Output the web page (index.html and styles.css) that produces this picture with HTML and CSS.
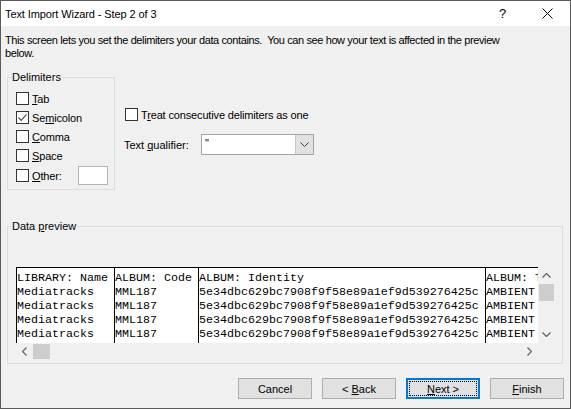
FILE: index.html
```html
<!DOCTYPE html>
<html lang="en">
<head>
    <meta charset="UTF-8">
    <meta name="viewport" content="width=device-width, initial-scale=1.0">
    <title>Text Import Wizard - Step 2 of 3</title>
    <link rel="stylesheet" href="styles.css">
</head>
<body>
    <div class="window">
        <div class="titlebar">
            <span class="title">Text Import Wizard - Step 2 of 3</span>
            <span class="caption-btn">?</span>
            <span class="caption-btn">
                <svg width="11" height="11" viewBox="0 0 11 11"><path d="M0.5 0.5L10.5 10.5M10.5 0.5L0.5 10.5" stroke="#000" stroke-width="1" fill="none"/></svg>
            </span>
        </div>
        <div class="content">
            <p class="intro">This screen lets you set the delimiters your data contains.&nbsp; You can see how your text is affected in the preview<br>below.</p>

            <div class="options">
                <fieldset class="group delimiters">
                    <legend>Delimiters</legend>
                    <label class="check"><span class="box"></span><span><u>T</u>ab</span></label>
                    <label class="check"><span class="box"><svg width="11" height="11" viewBox="0 0 11 11"><path d="M1.5 5.5L4.2 8.3L9.6 2.4" stroke="#505050" stroke-width="1.2" fill="none"/></svg></span><span>Se<u>m</u>icolon</span></label>
                    <label class="check"><span class="box"></span><span><u>C</u>omma</span></label>
                    <label class="check"><span class="box"></span><span><u>S</u>pace</span></label>
                    <label class="check other"><span class="box"></span><span><u>O</u>ther:</span><span class="textbox"></span></label>
                </fieldset>

                <div class="side">
                    <label class="check treat"><span class="box"></span><span>T<u>r</u>eat consecutive delimiters as one</span></label>
                    <div class="qualifier">
                        <span class="qualifier-label">Text <u>q</u>ualifier:</span>
                        <div class="combo">
                            <span class="combo-value">"</span>
                            <span class="combo-btn">
                                <svg width="9" height="5" viewBox="0 0 9 5"><path d="M0.5 0.5L4.5 4.5L8.5 0.5" stroke="#404040" stroke-width="1" fill="none"/></svg>
                            </span>
                        </div>
                    </div>
                </div>
            </div>

            <fieldset class="group preview">
                <legend>Data <u>p</u>review</legend>
                <div class="preview-frame">
                    <div class="cells">
<div class="col c1">LIBRARY: Name
Mediatracks
Mediatracks
Mediatracks
Mediatracks</div>
<div class="col c2">ALBUM: Code
MML187
MML187
MML187
MML187</div>
<div class="col c3">ALBUM: Identity
5e34dbc629bc7908f9f58e89a1ef9d539276425c
5e34dbc629bc7908f9f58e89a1ef9d539276425c
5e34dbc629bc7908f9f58e89a1ef9d539276425c
5e34dbc629bc7908f9f58e89a1ef9d539276425c</div>
<div class="col c4">ALBUM: Title
AMBIENT
AMBIENT
AMBIENT
AMBIENT</div>
                    </div>
                    <div class="vscroll">
                        <span class="arrow-btn"><svg width="9" height="5" viewBox="0 0 9 5"><path d="M0.5 4.5L4.5 0.5L8.5 4.5" stroke="#606060" stroke-width="1.2" fill="none"/></svg></span>
                        <span class="thumb"></span>
                        <span class="track"></span>
                        <span class="arrow-btn"><svg width="9" height="5" viewBox="0 0 9 5"><path d="M0.5 0.5L4.5 4.5L8.5 0.5" stroke="#606060" stroke-width="1.2" fill="none"/></svg></span>
                    </div>
                    <div class="hscroll">
                        <span class="arrow-btn"><svg width="5" height="9" viewBox="0 0 5 9"><path d="M4.5 0.5L0.5 4.5L4.5 8.5" stroke="#606060" stroke-width="1.2" fill="none"/></svg></span>
                        <span class="thumb"></span>
                        <span class="track"></span>
                        <span class="arrow-btn"><svg width="5" height="9" viewBox="0 0 5 9"><path d="M0.5 0.5L4.5 4.5L0.5 8.5" stroke="#606060" stroke-width="1.2" fill="none"/></svg></span>
                    </div>
                    <div class="corner"></div>
                </div>
            </fieldset>

            <div class="buttons">
                <button class="btn">Cancel</button>
                <button class="btn">&lt; <u>B</u>ack</button>
                <button class="btn default"><u>N</u>ext &gt;</button>
                <button class="btn"><u>F</u>inish</button>
            </div>
        </div>
    </div>
</body>
</html>
```

FILE: styles.css
```css
body {
    margin: 0;
    font-family: "Liberation Sans", Arial, sans-serif;
    font-size: 11px;
    color: #000;
    background-color: #f0f0f0;
}

.window {
    width: 571px;
    height: 409px;
    box-sizing: border-box;
    border: 1px solid #5a5a5a;
    background-color: #f0f0f0;
    display: flex;
    flex-direction: column;
}

.titlebar {
    height: 25px;
    background-color: #fff;
    display: flex;
    align-items: center;
}

.title {
    flex: 1;
    padding-left: 4px;
    letter-spacing: -0.1px;
}

.caption-btn {
    width: 45px;
    height: 25px;
    display: flex;
    align-items: center;
    justify-content: center;
    font-size: 13px;
}

.content {
    flex: 1;
    padding: 8px 6px 0;
    display: flex;
    flex-direction: column;
}

.intro {
    margin: 0 -2px;
    line-height: 13px;
    white-space: nowrap;
    letter-spacing: -0.39px;
}

.options {
    display: flex;
    margin-top: 11px;
}

.group {
    margin: 0;
    border: 1px solid #dcdcdc;
    min-width: 0;
    box-sizing: border-box;
}

.group legend {
    padding: 0 1px;
    margin-left: -5px;
    line-height: 13px;
}

.delimiters {
    width: 108px;
    padding: 5px 6px 4px 8px;
}

.check {
    display: flex;
    align-items: center;
    gap: 3px;
    height: 19px;
    letter-spacing: -0.15px;
}

.box {
    width: 13px;
    height: 13px;
    box-sizing: border-box;
    border: 1px solid #333;
    background-color: #fff;
    display: flex;
    flex: none;
}

.other {
    margin-top: 1px;
}

.textbox {
    margin-left: auto;
    width: 30px;
    height: 19px;
    box-sizing: border-box;
    border: 1px solid #b4b4b4;
    background-color: #fff;
}

.side {
    margin-left: 9px;
    padding-top: 34px;
}

.treat .box {
    margin-left: 1px;
}

.qualifier {
    display: flex;
    align-items: center;
    margin-top: 10px;
}

.qualifier-label {
    width: 77px;
}

.combo {
    width: 113px;
    height: 21px;
    box-sizing: border-box;
    border: 1px solid #a5a5a5;
    background-color: #fff;
    display: flex;
}

.combo-value {
    flex: 1;
    padding: 2px 0 0 3px;
}

.combo-btn {
    width: 17px;
    background-color: #e1e1e1;
    border-left: 1px solid #c8c8c8;
    display: flex;
    align-items: center;
    justify-content: center;
}

.preview {
    width: 556px;
    margin-top: 30px;
    padding: 34px 7px 3px 8px;
}

.preview-frame {
    display: grid;
    grid-template-columns: 522px 17px;
    grid-template-rows: 76px 17px;
}

.cells {
    display: flex;
    overflow: hidden;
    background-color: #fff;
    border-top: 1px solid #000;
}

.col {
    flex: none;
    box-sizing: border-box;
    border-left: 1px solid #000;
    padding-top: 3px;
    font-family: "Liberation Mono", "Courier New", monospace;
    font-size: 11.67px;
    line-height: 14px;
    white-space: pre;
    overflow: hidden;
}

.c1 { width: 98px; }
.c2 { width: 84px; }
.c3 { width: 287px; }
.c4 { flex: 1; }

.vscroll,
.hscroll {
    display: flex;
    background-color: #f0f0f0;
}

.vscroll {
    flex-direction: column;
}

.arrow-btn {
    width: 17px;
    height: 17px;
    display: flex;
    align-items: center;
    justify-content: center;
    flex: none;
}

.thumb {
    background-color: #cdcdcd;
    flex: none;
}

.vscroll .thumb {
    height: 17px;
    margin: 0 1px;
}

.hscroll .thumb {
    width: 17px;
    margin: 1px 0;
}

.track {
    flex: 1;
}

.buttons {
    display: flex;
    justify-content: flex-end;
    gap: 10px;
    margin-top: 14px;
}

.btn {
    width: 74px;
    height: 21px;
    box-sizing: border-box;
    background-color: #e1e1e1;
    border: 1px solid #adadad;
    font-family: inherit;
    font-size: 11px;
    color: #000;
    padding: 0;
}

.btn.default {
    border-color: #0078d7;
    box-shadow: inset 0 0 0 1px #0078d7;
    outline: 1px dotted #000;
    outline-offset: -4px;
}
```
